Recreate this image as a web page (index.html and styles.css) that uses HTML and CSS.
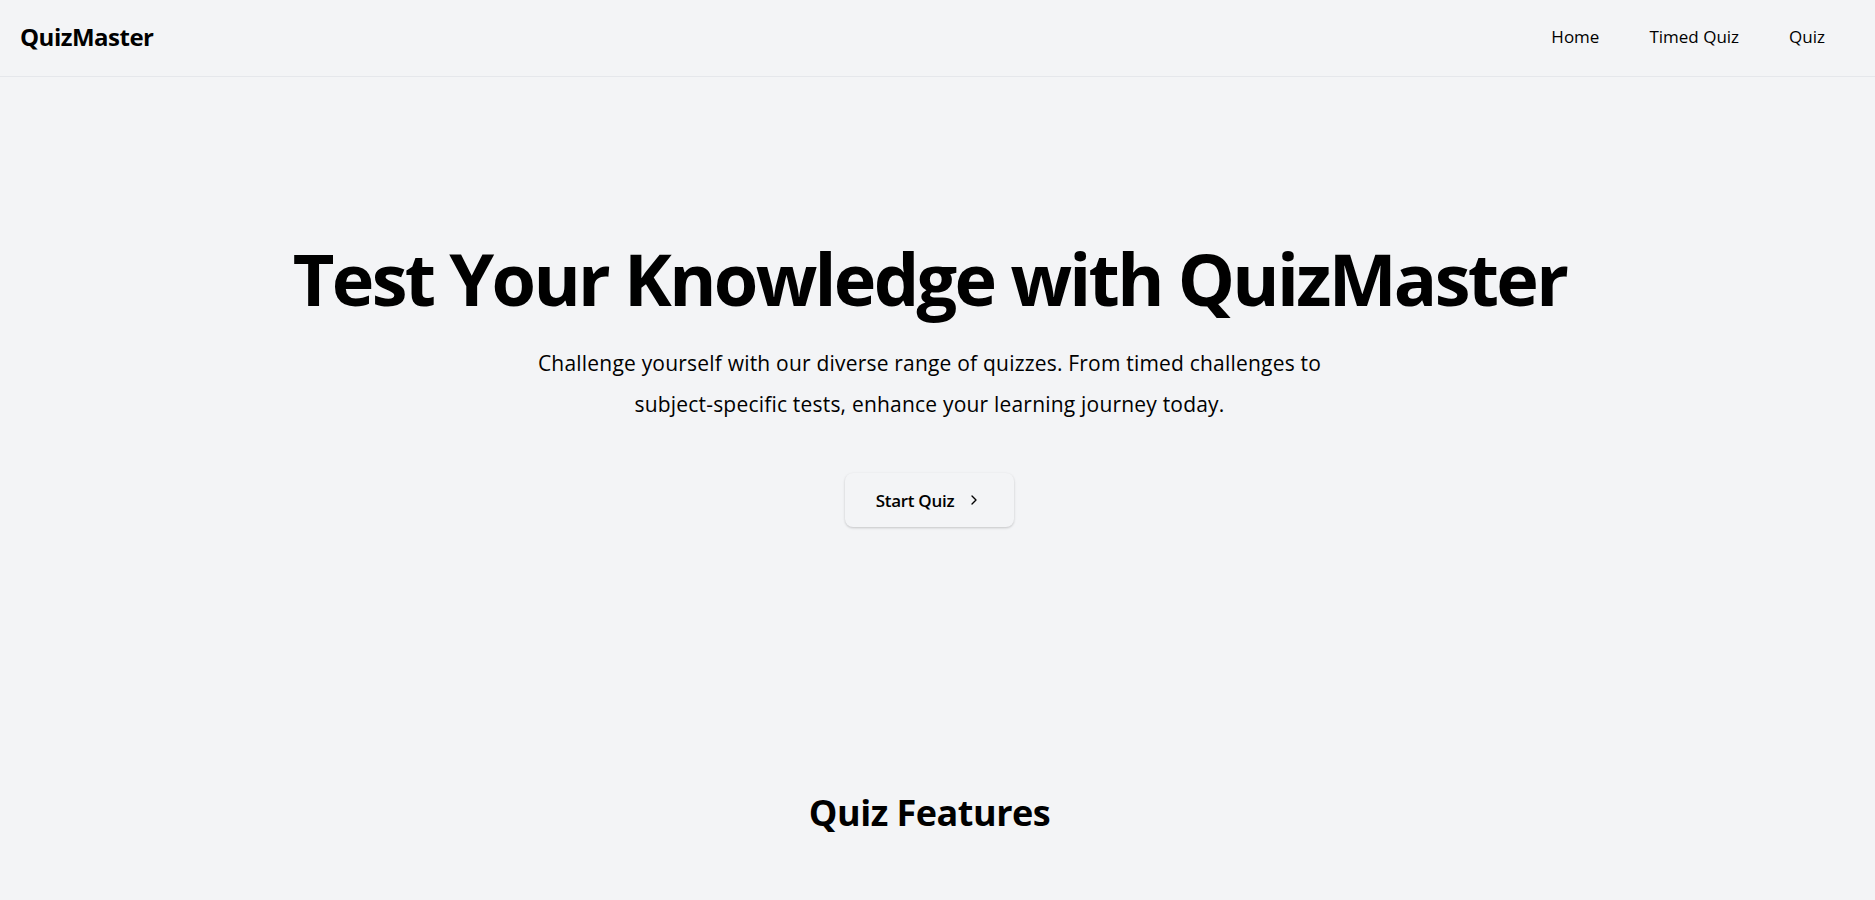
FILE: index.html
```html
<!DOCTYPE html>
<html lang="en">
<head>
<meta charset="utf-8">
<title>QuizMaster</title>
<link rel="stylesheet" href="styles.css">
</head>
<body>
<header class="topbar">
  <div class="logo">QuizMaster</div>
  <nav class="nav">
    <a href="#" class="nav-link">Home</a>
    <a href="#" class="nav-link">Timed Quiz</a>
    <a href="#" class="nav-link">Quiz</a>
  </nav>
</header>
<main class="content">
  <section class="hero">
    <h1 class="hero-title">Test Your Knowledge with QuizMaster</h1>
    <p class="hero-sub">Challenge yourself with our diverse range of quizzes. From timed challenges to subject-specific tests, enhance your learning journey today.</p>
    <button class="start-btn">Start Quiz
      <svg class="chev" width="16" height="16" viewBox="0 0 24 24" fill="none" stroke="currentColor" stroke-width="2" stroke-linecap="round" stroke-linejoin="round"><path d="m9 18 6-6-6-6"/></svg>
    </button>
  </section>
  <section class="features">
    <h2 class="features-title">Quiz Features</h2>
  </section>
</main>
</body>
</html>
```
FILE: styles.css
```css
* { box-sizing: border-box; }
html, body { margin: 0; padding: 0; }
body {
  background: #f3f4f6;
  color: #000;
  font-family: "Open Sans", "Noto Sans", sans-serif;
}
.topbar {
  height: 77px;
  border-bottom: 1px solid #e5e7eb;
  display: flex;
  align-items: center;
  justify-content: space-between;
  padding: 0 34px 3px 20px;
}
.logo {
  font-size: 24px;
  font-weight: 700;
  letter-spacing: -0.5px;
}
.nav {
  display: flex;
  gap: 18px;
}
.nav-link {
  color: #000;
  text-decoration: none;
  font-size: 17px;
  font-weight: 500;
  padding: 8px 16px;
}
.content {
  padding-right: 16px;
}
.hero {
  display: flex;
  flex-direction: column;
  align-items: center;
  text-align: center;
  padding-top: 165px;
  height: 711px;
}
.hero-title {
  margin: 0;
  font-size: 72px;
  line-height: 1;
  font-weight: 700;
  letter-spacing: -2.7px;
}
.hero-sub {
  margin: 29px 0 0;
  max-width: 820px;
  font-size: 21px;
  line-height: 41px;
  letter-spacing: 0.2px;
}
.start-btn {
  margin-top: 48px;
  display: flex;
  align-items: center;
  gap: 12px;
  height: 54px;
  padding: 0 32px 0 31px;
  border: none;
  border-radius: 8px;
  background: #f3f4f6;
  box-shadow: 0 1px 3px rgba(0,0,0,0.12), 0 1px 2px rgba(0,0,0,0.08);
  font-family: inherit;
  font-size: 17px;
  font-weight: 600;
  letter-spacing: -0.3px;
  color: #000;
}
.chev { width: 16px; height: 16px; }
.features {
  display: flex;
  justify-content: center;
}
.features-title {
  margin: 0;
  font-size: 36px;
  font-weight: 700;
  letter-spacing: -0.5px;
}
```
